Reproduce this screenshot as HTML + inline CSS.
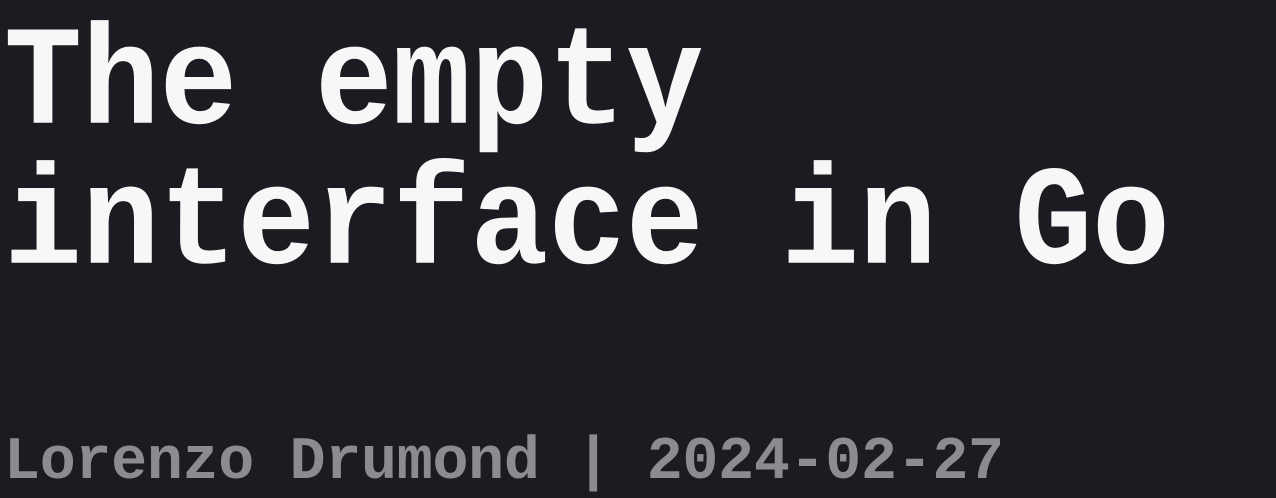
<!DOCTYPE html>
<html><head><style>
html,body{margin:0;padding:0;background:#1b1c21;width:1276px;height:498px;overflow:hidden}
div{position:absolute;left:4px;font-family:"Liberation Mono",monospace;font-weight:bold;white-space:pre;line-height:1}
.t{font-size:130px;color:#f7f7f7;letter-spacing:-0.3px;transform:scaleY(1.09);transform-origin:0 77%}
.a{font-size:60px;color:#8b8c90;letter-spacing:-0.3px}
</style></head><body>
<div class="t" style="top:25px">The empty</div>
<div class="t" style="top:165px">interface in Go</div>
<div class="a" style="top:433px">Lorenzo Drumond | 2024-02-27</div>
</body></html>
